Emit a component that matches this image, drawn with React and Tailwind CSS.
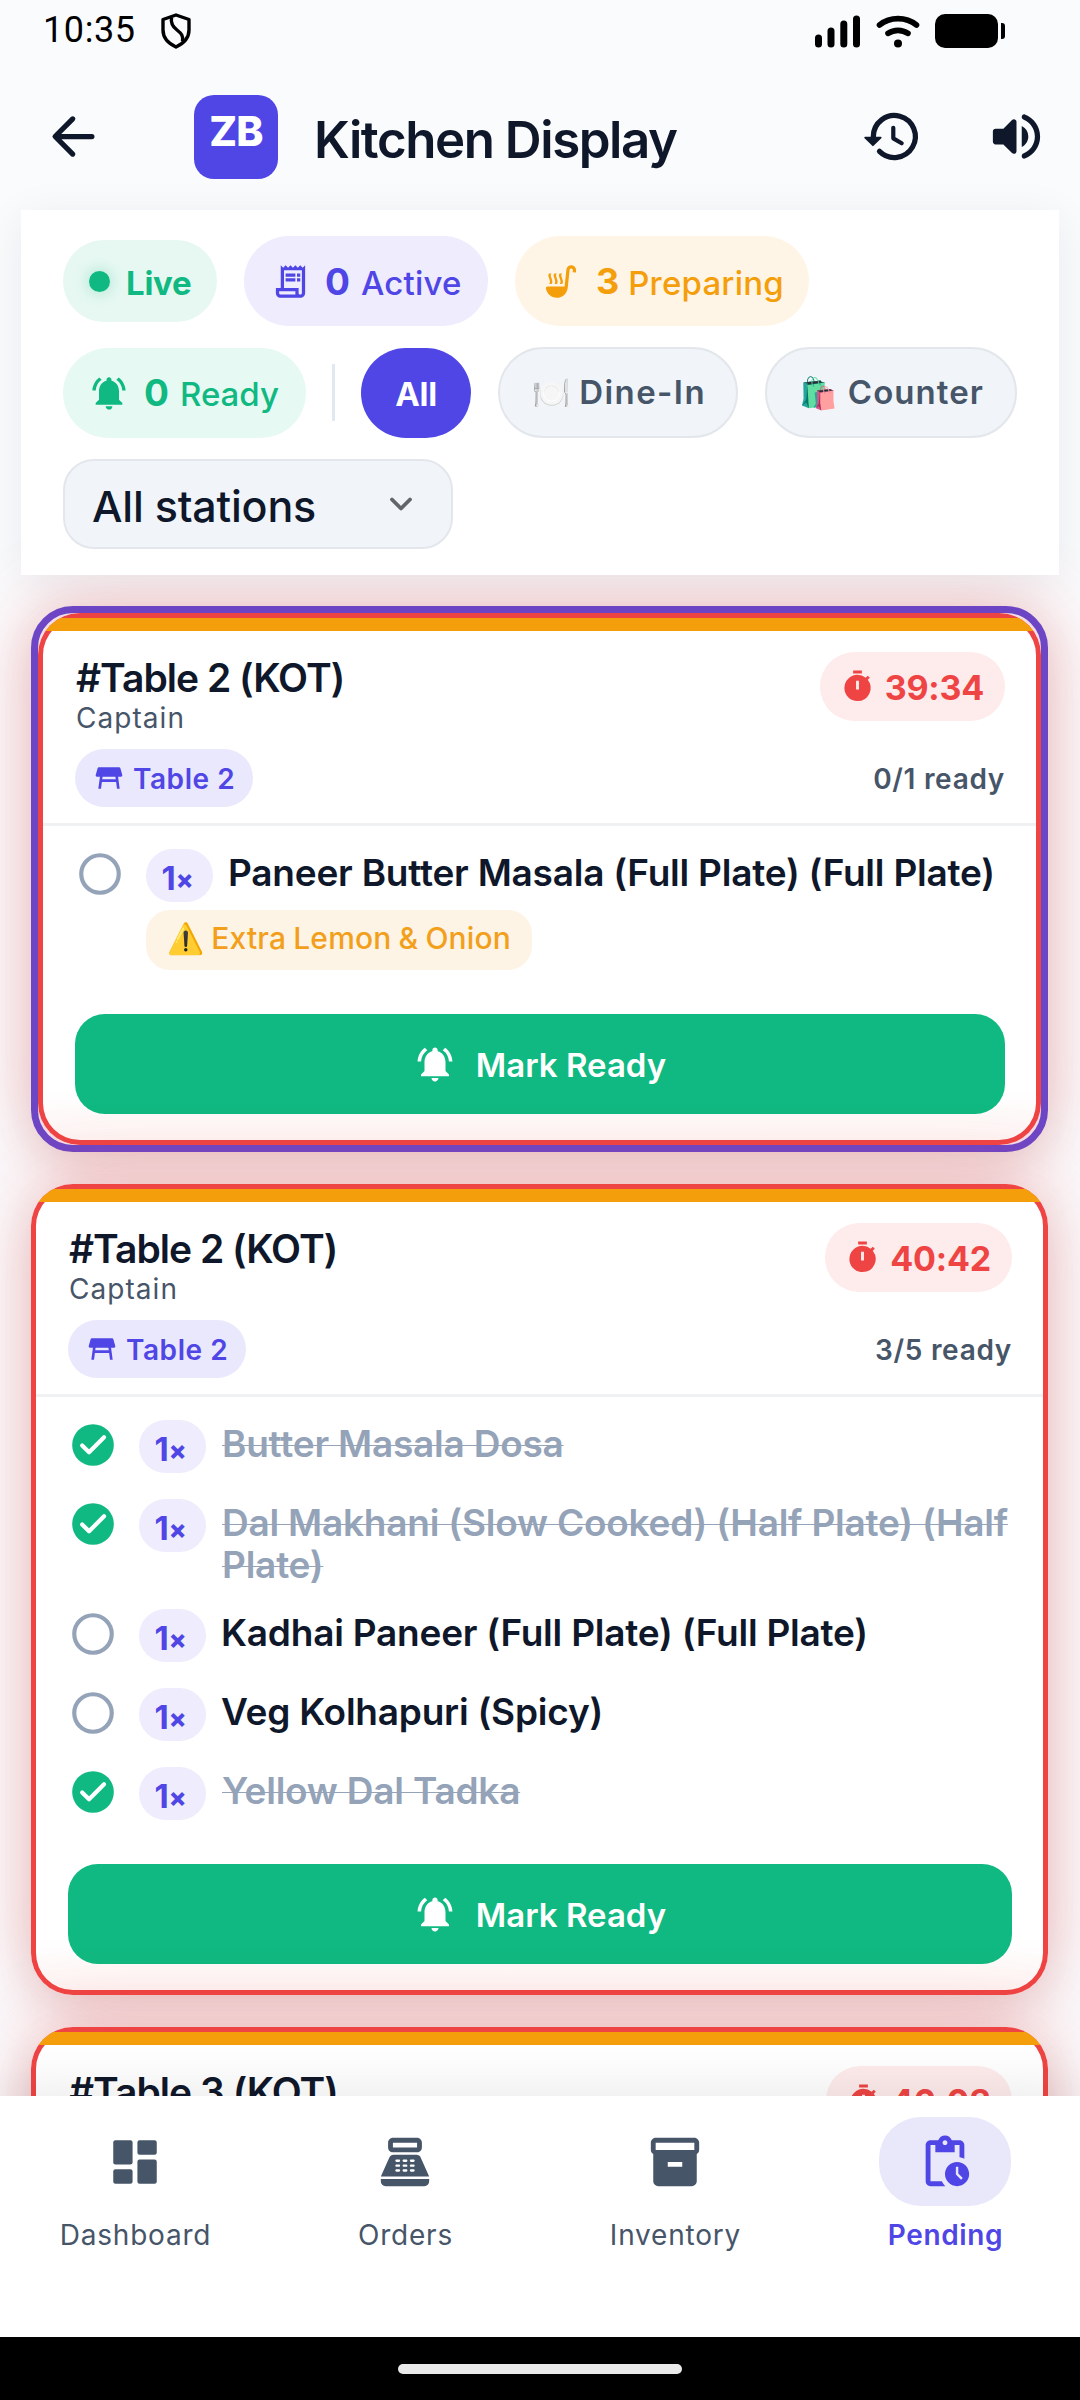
import {
    MdOutlineReceiptLong,
    MdSoupKitchen,
    MdNotificationsActive,
    MdTableRestaurant,
    MdTimer,
    MdPointOfSale,
    MdInventory2,
    MdPendingActions,
} from 'react-icons/md';

const orders = [
    {
        title: '#Table 2 (KOT)',
        by: 'Captain',
        table: 'Table 2',
        time: '39:34',
        ready: '0/1 ready',
        focused: true,
        items: [
            { qty: 1, name: 'Paneer Butter Masala (Full Plate) (Full Plate)', done: false, note: '⚠️ Extra Lemon & Onion' },
        ],
    },
    {
        title: '#Table 2 (KOT)',
        by: 'Captain',
        table: 'Table 2',
        time: '40:42',
        ready: '3/5 ready',
        items: [
            { qty: 1, name: 'Butter Masala Dosa', done: true },
            { qty: 1, name: 'Dal Makhani (Slow Cooked) (Half Plate) (Half Plate)', done: true },
            { qty: 1, name: 'Kadhai Paneer (Full Plate) (Full Plate)', done: false },
            { qty: 1, name: 'Veg Kolhapuri (Spicy)', done: false },
            { qty: 1, name: 'Yellow Dal Tadka', done: true },
        ],
    },
    {
        title: '#Table 3 (KOT)',
        by: 'Captain',
        table: 'Table 3',
        time: '46:03',
        ready: '0/2 ready',
        items: [],
    },
];

function ShieldIcon() {
    return (
        <svg viewBox="0 0 30 36" fill="none" stroke="currentColor" strokeWidth={3.4} strokeLinejoin="round" className="w-[30px] h-9">
            <path d="M15 2L28 6.500V17C28 24.500 22.500 30.500 15 34C7.500 30.500 2 24.500 2 17V6.500Z" />
            <path d="M10.500 4.500C9.500 10.500 12 14 16 17C20.500 20.500 22.500 23 21.500 28.500" />
        </svg>
    );
}

function SignalIcon() {
    return (
        <svg viewBox="0 0 46 33" fill="currentColor" className="w-[46px] h-[33px]">
            <rect x="0" y="19.500" width="7" height="13" rx="3.500" />
            <rect x="12.500" y="12.500" width="7" height="20" rx="3.500" />
            <rect x="25.300" y="5.500" width="7" height="27" rx="3.500" />
            <rect x="38" y="0.500" width="7" height="32" rx="3.500" />
        </svg>
    );
}

function WifiIcon() {
    return (
        <svg viewBox="0 0 44 33" fill="none" stroke="currentColor" strokeWidth={5.6} strokeLinecap="round" className="w-11 h-[33px]">
            <path d="M3.500 10C14 1.500 30 1.500 40.500 10" />
            <path d="M12 18.400C18 14.300 26 14.300 32 18.400" />
            <circle cx="22" cy="28.500" r="4" fill="currentColor" stroke="none" />
        </svg>
    );
}

function BatteryIcon() {
    return (
        <svg viewBox="0 0 71 34" fill="currentColor" className="w-[71px] h-[34px]">
            <rect x="0" y="0" width="63" height="34" rx="10" />
            <path d="M66 9h1a3 3 0 0 1 3 3v10a3 3 0 0 1-3 3h-1z" />
        </svg>
    );
}

function BackIcon() {
    return (
        <svg viewBox="0 0 24 24" fill="none" stroke="currentColor" strokeWidth={2} strokeLinecap="round" strokeLinejoin="round" className="size-[63px]">
            <path d="M19 12H5.200M11.700 18.700L5 12l6.700-6.700" />
        </svg>
    );
}

function HistoryIcon() {
    return (
        <svg viewBox="0 0 24 24" fill="none" stroke="currentColor" strokeLinecap="round" strokeLinejoin="round" className="size-[63px]">
            <path d="M4.700 12.500V12a8 8 0 1 1 2.340 5.660" strokeWidth={2} />
            <path d="M12.300 8.700v4l3.200 1.850" strokeWidth={1.600} />
            <path d="M1.600 12.400h5.900L4.550 15.300z" fill="currentColor" strokeWidth={0.700} />
        </svg>
    );
}

function VolumeIcon() {
    return (
        <svg viewBox="0 0 24 24" fill="currentColor" className="size-[63px]">
            <path d="M3 10v4c0 .55.45 1 1 1h3l3.290 3.290c.63.63 1.710.18 1.710-.71V6.410c0-.89-1.080-1.340-1.710-.71L7 9H4c-.55 0-1 .45-1 1zm13.500 2A4.500 4.500 0 0 0 14 7.970v8.050c1.480-.73 2.500-2.250 2.500-4.020z" />
            <path d="M14 4.450v.2c0 .38.25.71.6.85C17.180 6.530 19 9.060 19 12s-1.820 5.470-4.400 6.500c-.36.14-.6.47-.6.85v.2c0 .63.63 1.070 1.210.85C18.600 19.110 21 15.840 21 12s-2.400-7.110-5.790-8.400c-.58-.23-1.210.22-1.210.85z" />
        </svg>
    );
}

function DashboardIcon() {
    return (
        <svg viewBox="0 0 24 24" fill="currentColor" className="size-[58px]">
            <rect x="3" y="3" width="8" height="10" rx="0.900" />
            <rect x="13" y="3" width="8" height="6" rx="0.900" />
            <rect x="13" y="11" width="8" height="10" rx="0.900" />
            <rect x="3" y="15" width="8" height="6" rx="0.900" />
        </svg>
    );
}

function CheckIcon({ done }) {
    return (
        <svg viewBox="0 0 24 24" fill="none" className="size-[50px] shrink-0">
            {done ? (
                <>
                    <circle cx="12" cy="12" r="10" fill="#10B981" />
                    <path d="M6.800 12.200l3.300 3.300 7.200-7.200" stroke="#fff" strokeWidth={2} strokeLinecap="round" strokeLinejoin="round" />
                </>
            ) : (
                <circle cx="12" cy="12" r="9" stroke="#94A3B8" strokeWidth={2} />
            )}
        </svg>
    );
}

function StatusBar() {
    return (
        <div className="h-[62px] shrink-0 flex items-center pl-[43px] pr-[74px] text-black">
            <span className="w-[94px] font-[Roboto] text-[36px] leading-9 tracking-[0.600px] -mt-0.5">10:35</span>
            <span className="ml-6"><ShieldIcon /></span>
            <div className="ml-auto flex items-center gap-[15px]">
                <SignalIcon />
                <WifiIcon />
                <BatteryIcon />
            </div>
        </div>
    );
}

function Header() {
    return (
        <header className="h-[148px] shrink-0 flex items-center pl-[42px] pr-8 text-[#0F172A]">
            <button><BackIcon /></button>
            <div className="ml-[89px] mt-0.5 size-[84px] rounded-[20px] bg-[#4F46E5] flex items-center justify-center pb-3">
                <span className="text-white text-[41px] leading-none font-extrabold tracking-[-0.800px]">ZB</span>
            </div>
            <h1 className="ml-9 mt-1.5 text-[51px] leading-none font-semibold tracking-[-1.440px] whitespace-nowrap">Kitchen Display</h1>
            <div className="ml-auto flex items-center gap-[61px]">
                <button><HistoryIcon /></button>
                <button><VolumeIcon /></button>
            </div>
        </header>
    );
}

function Filters() {
    return (
        <section className="relative z-10 mx-[21px] h-[365px] shrink-0 bg-white px-[42px] py-[26px] flex flex-col gap-[21px] shadow-[0_8px_42px_rgba(15,23,42,0.07)]">
            <div className="flex items-center gap-[27px] h-[90px]">
                <div className="w-[154px] h-[82px] rounded-full bg-[#E7F8F2] text-[#10B981] flex items-center pl-[26px]">
                    <span className="size-[21px] rounded-full bg-[#10B981] shadow-[0_0_16px_rgba(16,185,129,0.35)]" />
                    <span className="ml-4 mt-1 text-[33px] leading-none font-bold tracking-[-0.260px]">Live</span>
                </div>
                <div className="w-[244px] h-[90px] rounded-full bg-[#EEECFD] text-[#4F46E5] flex items-center pl-[27px]">
                    <MdOutlineReceiptLong className="size-[39px]" />
                    <span className="ml-[15px] text-[37px] leading-none font-bold">0</span>
                    <span className="ml-[11px] mt-1 text-[33px] leading-none font-medium tracking-[0.190px]">Active</span>
                </div>
                <div className="w-[294px] h-[90px] rounded-full bg-[#FFF5E7] text-[#F59E0B] flex items-center pl-[26px]">
                    <MdSoupKitchen className="size-[39px]" />
                    <span className="ml-4 text-[36px] leading-none font-bold">3</span>
                    <span className="ml-[9px] mt-1 text-[33px] leading-none font-medium tracking-[0.190px]">Preparing</span>
                </div>
            </div>

            <div className="flex items-center h-[91px]">
                <div className="w-[243px] h-[90px] rounded-full bg-[#E7F9F3] text-[#10B981] flex items-center pl-[26px]">
                    <MdNotificationsActive className="size-[40px]" />
                    <span className="ml-[15px] text-[37px] leading-none font-bold">0</span>
                    <span className="ml-[11px] mt-1 text-[33px] leading-none font-medium">Ready</span>
                </div>
                <div className="ml-[26px] w-[3px] h-[57px] bg-slate-200" />
                <button className="ml-[26px] w-[110px] h-[90px] rounded-full bg-[#4F46E5] text-white text-[33px] leading-none font-bold tracking-[-0.290px] pt-1">All</button>
                <button className="ml-[27px] w-[240px] h-[91px] rounded-full bg-[#F1F5F9] border-2 border-[#E3E7EC] text-[#475569] flex items-center pl-8">
                    <span className="text-[31px] leading-none">🍽️</span>
                    <span className="ml-auto mr-[30px] text-[33px] leading-none font-semibold tracking-[1.400px] whitespace-nowrap">Dine-In</span>
                </button>
                <button className="ml-[27px] w-[252px] h-[91px] rounded-full bg-[#F1F5F9] border-2 border-[#E3E7EC] text-[#475569] flex items-center pl-8">
                    <span className="text-[31px] leading-none">🛍️</span>
                    <span className="ml-auto mr-[31px] text-[33px] leading-none font-semibold tracking-[1.060px] whitespace-nowrap">Counter</span>
                </button>
            </div>

            <button className="w-[390px] h-[90px] rounded-[31px] bg-[#F1F5F9] border-2 border-[#E3E7EC] flex items-center justify-between pl-[27px] pr-[39px] text-[#0F172A]">
                <span className="mt-1 text-[43px] leading-none font-medium tracking-[-0.210px]">All stations</span>
                <svg viewBox="0 0 22 14" fill="none" stroke="#62656A" strokeWidth={3.800} strokeLinecap="round" strokeLinejoin="round" className="w-[22px] h-3.5">
                    <path d="M2 2.500l9 9 9-9" />
                </svg>
            </button>
        </section>
    );
}

function OrderItem({ item }) {
    return (
        <div className="flex items-start">
            <CheckIcon done={item.done} />
            <div className="ml-[21px] flex-1 min-w-0">
                <div className="flex items-start">
                    <span className="w-[67px] h-[53px] shrink-0 rounded-full bg-[#EEECFD] text-[#4F46E5] text-[33px] leading-none font-bold flex items-center justify-center pt-[5px] pr-1">
                        {item.qty}
                        <span className="text-[26px] leading-none font-extrabold mt-1">×</span>
                    </span>
                    <span
                        className={item.done
                            ? 'ml-4 pt-[3px] -mb-[3px] text-[37px] leading-[42px] font-semibold tracking-[-0.220px] text-[#94A3B8] line-through decoration-1'
                            : 'ml-[15px] pt-[3px] -mb-[3px] text-[37px] leading-[42px] font-semibold tracking-[-0.220px] text-[#0F172A] whitespace-nowrap'}
                    >
                        {item.name}
                    </span>
                </div>
                {item.note && (
                    <div className="mt-2 w-[386px] h-[60px] rounded-[24px] bg-[#FEF4E5] text-[#F2A01C] text-[30px] leading-none font-medium tracking-[0.150px] [word-spacing:-1px] whitespace-nowrap flex items-center pl-[21px] pb-1">
                        {item.note}
                    </div>
                )}
            </div>
        </div>
    );
}

function OrderCard({ order }) {
    return (
        <article className="rounded-[42px] overflow-hidden bg-[linear-gradient(to_top,#fdf4f3,#ffffff_56px)] shadow-[inset_0_0_0_5px_#EF4444]">
            <div className="mt-[5px] h-[13px] bg-[#F59E0B]" />
            <div className="pt-[21px] pb-4 pl-[37px] pr-9">
                <div className="flex justify-between h-[97px]">
                    <div className="pt-px">
                        <h2 className="pl-px text-[39px] leading-[50px] font-semibold tracking-[-0.980px] text-[#0F172A]">{order.title}</h2>
                        <p className="pl-px text-[28px] leading-[30px] tracking-[1.050px] text-[#475569]">{order.by}</p>
                    </div>
                    <div className="h-[69px] rounded-full bg-[#FEEBEB] text-[#EF4444] flex items-center pl-5 pr-[21px]">
                        <MdTimer className="size-[35px]" />
                        <span className="ml-2.5 mt-[3px] text-[34px] leading-none font-bold tracking-[-0.200px]">{order.time}</span>
                    </div>
                </div>
                <div className="flex items-center justify-between h-[58px]">
                    <span className="h-[58px] rounded-full bg-[#EAE8FC] text-[#4F46E5] flex items-center pl-[18px] pr-[18px]">
                        <MdTableRestaurant className="size-[32px]" />
                        <span className="ml-2 mt-0.5 text-[28px] leading-none font-semibold tracking-[0.550px]">{order.table}</span>
                    </span>
                    <span className="mt-0.5 text-[28px] leading-none font-semibold tracking-[0.700px] text-[#475569]">{order.ready}</span>
                </div>
            </div>
            <div className="mx-[5px] h-[3px] bg-[#F0F1F3]" />
            <div className="pl-[37px] pr-9 pt-[23px] pb-[31px]">
                <div className="flex flex-col gap-[26px]">
                    {order.items.map((item) => <OrderItem key={item.name} item={item} />)}
                </div>
                <button className="mt-11 w-full h-[100px] rounded-[30px] bg-[#10B981] text-white flex items-center justify-center">
                    <MdNotificationsActive className="size-[42px]" />
                    <span className="ml-5 mt-[3px] text-[33px] leading-none font-semibold">Mark Ready</span>
                </button>
            </div>
        </article>
    );
}

function OrderList() {
    return (
        <main className="flex-1 min-h-0 pl-[31px] pr-8 pt-[31px] flex flex-col gap-8">
            {orders.map((order) => (
                <div
                    key={order.time}
                    className={order.focused
                        ? 'shrink-0 rounded-[42px] border-[7px] border-[#6D46C6] bg-[#F3DCE6] shadow-[0_0_72px_rgba(239,68,68,0.34),0_12px_40px_rgba(0,0,0,0.08)]'
                        : 'shrink-0 rounded-[42px] shadow-[0_0_72px_rgba(239,68,68,0.34),0_12px_40px_rgba(0,0,0,0.08)]'}
                >
                    <OrderCard order={order} />
                </div>
            ))}
        </main>
    );
}

function NavItem({ icon, label, active }) {
    return (
        <button className="flex-1 flex flex-col items-center">
            <span className={active ? 'w-[132px] h-[89px] rounded-[42px] bg-[#E9E8FB] text-[#4F46E5] flex items-center justify-center' : 'w-[132px] h-[89px] text-[#475569] flex items-center justify-center'}>
                {icon}
            </span>
            <span className={active ? 'mt-3.5 pl-px text-[28px] leading-[30px] font-semibold tracking-[0.650px] text-[#4F46E5]' : 'mt-3.5 pl-px text-[28px] leading-[30px] tracking-[0.800px] text-[#475569]'}>
                {label}
            </span>
        </button>
    );
}

export default function App() {
    return (
        <div className="w-[1080px] h-[2400px] overflow-hidden flex flex-col bg-[#FAFBFD] font-[Inter,sans-serif]">
            <StatusBar />
            <Header />
            <Filters />
            <OrderList />
            <nav className="relative z-20 h-[241px] shrink-0 bg-white flex items-start pt-[21px] shadow-[0_-10px_50px_rgba(0,0,0,0.08)]">
                <NavItem icon={<DashboardIcon />} label="Dashboard" />
                <NavItem icon={<MdPointOfSale className="size-[58px]" />} label="Orders" />
                <NavItem icon={<MdInventory2 className="size-[58px]" />} label="Inventory" />
                <NavItem icon={<MdPendingActions className="size-[58px]" />} label="Pending" active />
            </nav>
            <div className="relative z-20 h-[63px] shrink-0 bg-black flex justify-center">
                <div className="mt-[27px] w-[284px] h-2.5 rounded-full bg-[#EAEAEA]" />
            </div>
        </div>
    );
}
